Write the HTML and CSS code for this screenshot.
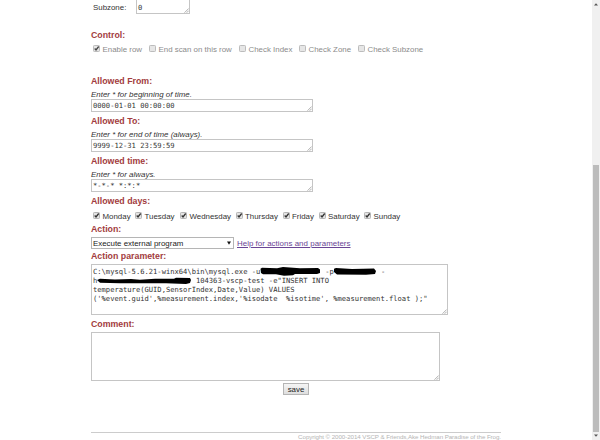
FILE: index.html
```html
<!DOCTYPE html>
<html lang="en">
<head>
<meta charset="utf-8">
<title>VSCP - Decision matrix row</title>
<link rel="stylesheet" href="styles.css">
</head>
<body>
<svg class="defs" width="0" height="0">
  <symbol id="box" viewBox="0 0 7 7"><rect x=".5" y=".5" width="6" height="6" rx=".8" fill="#e4e4e4" stroke="#b5b5b5"/></symbol>
  <symbol id="tick" viewBox="0 0 7 7"><rect x=".5" y=".5" width="6" height="6" rx=".8" fill="#e4e4e4" stroke="#b5b5b5"/><path d="M1.7 3.5 3 4.9 5.7 1.5" fill="none" stroke="#333" stroke-width="1.3"/></symbol>
  <symbol id="grip" viewBox="0 0 5 5"><path d="M.5 4.7 4.7 .5M2.7 4.7 4.7 2.7" fill="none" stroke="#999" stroke-width=".8"/></symbol>
</svg>
<div class="page">
  <main class="form">
    <div class="subzone"><label>Subzone:</label><div class="field small">0<svg class="grip"><use href="#grip"/></svg></div></div>

    <h2 class="control">Control:</h2>
    <div class="checks muted">
      <label class="c1"><svg><use href="#tick"/></svg>Enable row</label>
      <label class="c2"><svg><use href="#box"/></svg>End scan on this row</label>
      <label class="c3"><svg><use href="#box"/></svg>Check Index</label>
      <label class="c4"><svg><use href="#box"/></svg>Check Zone</label>
      <label class="c5"><svg><use href="#box"/></svg>Check Subzone</label>
    </div>

    <section class="group first">
      <h2>Allowed From:</h2>
      <p>Enter * for beginning of time.</p>
      <div class="field">0000-01-01 00:00:00<svg class="grip"><use href="#grip"/></svg></div>
    </section>
    <section class="group">
      <h2>Allowed To:</h2>
      <p>Enter * for end of time (always).</p>
      <div class="field">9999-12-31 23:59:59<svg class="grip"><use href="#grip"/></svg></div>
    </section>
    <section class="group">
      <h2>Allowed time:</h2>
      <p>Enter * for always.</p>
      <div class="field">*-*-* *:*:*<svg class="grip"><use href="#grip"/></svg></div>
    </section>

    <h2 class="days-title">Allowed days:</h2>
    <div class="checks days">
      <label class="d1"><svg><use href="#tick"/></svg>Monday</label>
      <label class="d2"><svg><use href="#tick"/></svg>Tuesday</label>
      <label class="d3"><svg><use href="#tick"/></svg>Wednesday</label>
      <label class="d4"><svg><use href="#tick"/></svg>Thursday</label>
      <label class="d5"><svg><use href="#tick"/></svg>Friday</label>
      <label class="d6"><svg><use href="#tick"/></svg>Saturday</label>
      <label class="d7"><svg><use href="#tick"/></svg>Sunday</label>
    </div>

    <h2 class="action-title">Action:</h2>
    <div class="action">
      <div class="select"><span>Execute external program</span><svg width="4" height="4" viewBox="0 0 4 4"><path d="M0 .5h4L2 3.8z" fill="#111"/></svg></div>
      <a href="#">Help for actions and parameters</a>
    </div>

    <h2 class="param-title">Action parameter:</h2>
    <div class="field param"><div>C:\mysql-5.6.21-winx64\bin\mysql.exe -u<span class="user"></span>-p<span class="password"></span>-</div><div>h                       104363-vscp-test -e"INSERT INTO</div><div>temperature(GUID,SensorIndex,Date,Value) VALUES</div><div>('%event.guid',%measurement.index,'%isodate  %isotime', %measurement.float );"</div>
      <svg class="redact" width="357" height="51" viewBox="91 264 357 51"><g fill="#000">
        <path d="M260.5 268.8 262 267.8 277 268.3 283 267 300 268.2 318 267.9 320 269.5 320 273 317 274 295 274 293 275.3 284 275.7 276 274.3 263 274.3 261 273z"/>
        <path d="M334 268.8 336 268 352 269 374 268.5 376 271 375 274 366 274.7 337 274.4 334 272z"/>
        <path d="M97 280 100 278.7 115 279.5 131 279 140 279.8 155 278.8 174 278.8 176 277.8 190 278 191 280 190 283 186 284 166 283.3 120 283.3 100 282.8z"/></g>
      </svg>
      <svg class="grip"><use href="#grip"/></svg>
    </div>

    <h2 class="comment-title">Comment:</h2>
    <div class="field comment"><svg class="grip"><use href="#grip"/></svg></div>
    <button class="save">save</button>
    <footer><span>Copyright © 2000-2014 VSCP &amp; Friends,Ake Hedman Paradise of the Frog.</span></footer>
  </main>
  <aside class="scrollbar">
    <svg width="4" height="3" viewBox="0 0 4 3"><path d="M0 2.5 2 .3 4 2.5z" fill="#555"/></svg>
    <div class="thumb"></div>
    <svg width="4" height="3" viewBox="0 0 4 3"><path d="M0 .5 2 2.7 4 .5z" fill="#555"/></svg>
  </aside>
</div>
</body>
</html>
```
FILE: styles.css
```css
* { box-sizing: border-box; }
body { margin: 0; background: #fff; color: #333; font: 7.9px/10px "Liberation Sans", Arial, sans-serif; overflow: hidden; }
.defs { display: none; }
.page { display: flex; justify-content: space-between; height: 440px; overflow: hidden; }
.form { width: 410px; margin-left: 91px; white-space: nowrap; }
h2 { margin: 0; height: 11px; font-size: 8.8px; line-height: 11px; font-weight: bold; color: #a23c40; }
p { margin: 2px 0 0; height: 10px; line-height: 12px; font-style: italic; letter-spacing: .03px; color: #333; }
.field { position: relative; width: 222px; height: 13px; padding: 1px 1px; border: 1px solid #c5c5c5; font: 7.13px/9px "DejaVu Sans Mono", monospace; white-space: pre; color: #333; }
.grip { position: absolute; right: 0; bottom: 0; width: 5px; height: 5px; }

.subzone { display: flex; height: 14px; padding-left: 2px; }
.subzone label { width: 43px; padding-top: 3px; }
.small { width: 54px; height: 16px; margin-top: -2px; padding-top: 4px; }
.control { margin-top: 16px; }
.checks { display: flex; height: 10px; margin-top: 3px; padding-left: 2px; line-height: 10px; }
.checks label { display: flex; align-items: flex-start; height: 12px; padding-top: 1px; }
.checks svg { width: 7px; height: 7px; margin-right: 2.5px; flex: none; }
.muted { color: #8b8b8b; }
.muted svg { opacity: .9; }
.c1 { width: 56px; }
.c2 { width: 90px; }
.c3 { width: 60px; }
.c4 { width: 59px; }
.group { margin-top: 4px; }
.group.first { margin-top: 22px; }

.days-title { margin-top: 4px; }
.days { padding-top: 1px; }
.d1 { width: 42px; }
.d2 { width: 45px; }
.d3 { width: 55.5px; }
.d4 { width: 47px; }
.d5 { width: 36px; }
.d6 { width: 45.5px; }
.action-title { margin-top: 4px; }
.action { display: flex; gap: 3px; height: 12px; margin-top: 2px; line-height: 12px; }
.action a { padding-top: 1px; letter-spacing: .04px; color: #6a4595; }
.select { display: flex; align-items: center; justify-content: space-between; width: 143px; height: 12px; padding: 0 2px 0 1px; border: 1px solid #b5b5b5; color: #222; }
.select span { padding-top: 1px; }
.param-title { margin-top: 2px; }
.param { width: 357px; height: 51px; margin-top: 2px; padding-top: 2px; }
.param > div { height: 9px; }
.user, .password { display: inline-block; }
.user { width: 65px; }
.password { width: 47px; }
.redact { position: absolute; left: -1px; top: -1px; }
.comment-title { margin-top: 4px; }
.comment { width: 349px; height: 49px; margin-top: 2px; }
.save { display: block; width: 26px; height: 12px; margin: 2px 0 0 192px; padding: 0; border: 1px solid #b5b5b5; background: linear-gradient(#f5f5f5, #dedede); font: 7.9px/9px "Liberation Sans", Arial, sans-serif; color: #222; }
footer { margin-top: 37px; border-top: 1px solid #ccc; text-align: right; font-size: 6.2px; line-height: 7px; letter-spacing: -.07px; color: #b5b5b5; }

.scrollbar { display: flex; flex-direction: column; align-items: center; width: 8px; padding: 3px 0; background: #f0f0f0; }
.thumb { width: 6px; height: 267px; margin: 159px 0 2px; background: #bcbcbc; }
```
